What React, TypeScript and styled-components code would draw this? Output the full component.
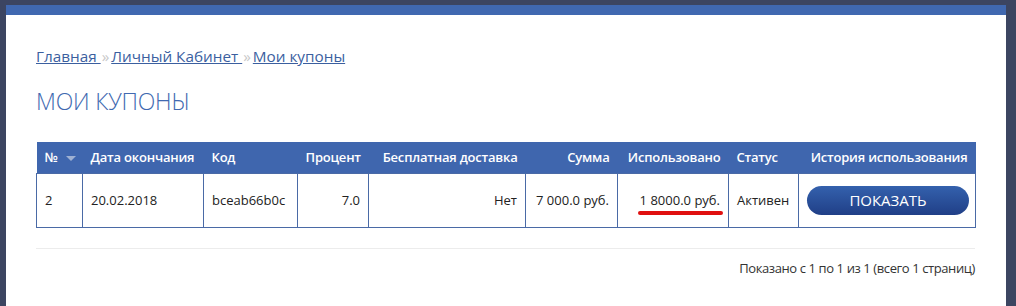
import React from "react";
import styled, { createGlobalStyle } from "styled-components";

const Global = createGlobalStyle`
  html, body { margin: 0; padding: 0; }
  body {
    background: #3c4561;
    font-family: "Open Sans", "Noto Sans", sans-serif;
    overflow: hidden;
  }
`;

const Page = styled.div`
  padding: 5px 10px 0 6px;
  height: 306px;
  box-sizing: border-box;
`;

const Panel = styled.div`
  background: #fff;
  height: 100%;
  border-top: 10px solid #4068b0;
  padding: 30px 30px 0 30px;
  box-sizing: border-box;
`;

const Crumbs = styled.nav`
  font-size: 15.3px;
  line-height: 22px;
  color: #c9c9c9;
`;

const Crumb = styled.a`
  color: #3b5f9f;
  text-decoration: underline;
  cursor: pointer;
`;

const Sep = styled.span`
  color: #c8c8c8;
  margin: 0 2px 0 1px;
`;

const Title = styled.h1`
  margin: 20px 0 0 0;
  font-size: 23px;
  line-height: 28px;
  font-weight: 300;
  color: #4169b0;
  letter-spacing: -0.2px;
`;

const Table = styled.table`
  margin-top: 27px;
  width: 939px;
  table-layout: fixed;
  border-collapse: collapse;
  font-size: 13px;
  color: #222;
`;

const Th = styled.th<{ $right?: boolean; $w: number }>`
  background: #3f66ae;
  color: #fff;
  font-weight: 600;
  font-size: 13px;
  height: 31px;
  padding: 0 8px;
  width: ${(p) => p.$w}px;
  text-align: ${(p) => (p.$right ? "right" : "left")};
  box-sizing: border-box;
  white-space: nowrap;
  letter-spacing: -0.2px;
`;

const Td = styled.td<{ $right?: boolean }>`
  border: 1px solid #4a6aa6;
  height: 54px;
  padding: 0 8px;
  text-align: ${(p) => (p.$right ? "right" : "left")};
  box-sizing: border-box;
  white-space: nowrap;
`;

const Caret = styled.span`
  display: inline-block;
  margin-left: 8px;
  width: 0;
  height: 0;
  border-left: 5px solid transparent;
  border-right: 5px solid transparent;
  border-top: 5px solid #9fb1d3;
  vertical-align: middle;
`;

const Marked = styled.span`
  position: relative;
  &::after {
    content: "";
    position: absolute;
    left: -2px;
    right: -3px;
    bottom: -6px;
    height: 4px;
    border-radius: 2px;
    background: #e01010;
  }
`;

const ShowButton = styled.button`
  display: block;
  margin-left: auto;
  width: 162px;
  height: 29px;
  border: none;
  border-radius: 15px;
  background: linear-gradient(#3461ad, #203f87);
  color: #fff;
  font-family: "Open Sans", "Noto Sans", sans-serif;
  font-size: 15px;
  cursor: pointer;
`;

const Divider = styled.div`
  width: 939px;
  height: 1px;
  background: #ececec;
  margin-top: 20px;
`;

const Footer = styled.div`
  width: 939px;
  text-align: right;
  font-size: 13px;
  color: #333;
  margin-top: 10px;
  letter-spacing: -0.4px;
`;

export default function App() {
  return (
    <>
      <Global />
      <Page>
        <Panel>
          <Crumbs>
            <Crumb>Главная </Crumb>
            <Sep>»</Sep>
            <Crumb>Личный Кабинет </Crumb>
            <Sep>»</Sep>
            <Crumb>Мои купоны</Crumb>
          </Crumbs>
          <Title>МОИ КУПОНЫ</Title>
          <Table>
            <thead>
              <tr>
                <Th $w={46}>
                  №<Caret />
                </Th>
                <Th $w={121}>Дата окончания</Th>
                <Th $w={94}>Код</Th>
                <Th $w={71} $right>
                  Процент
                </Th>
                <Th $w={157} $right>
                  Бесплатная доставка
                </Th>
                <Th $w={92} $right>
                  Сумма
                </Th>
                <Th $w={111} $right>
                  Использовано
                </Th>
                <Th $w={70}>Статус</Th>
                <Th $w={177} $right>
                  История использования
                </Th>
              </tr>
            </thead>
            <tbody>
              <tr>
                <Td>2</Td>
                <Td>20.02.2018</Td>
                <Td>bceab66b0c</Td>
                <Td $right>7.0</Td>
                <Td $right>Нет</Td>
                <Td $right>7 000.0 руб.</Td>
                <Td $right>
                  <Marked>1 8000.0 руб.</Marked>
                </Td>
                <Td>Активен</Td>
                <Td>
                  <ShowButton>ПОКАЗАТЬ</ShowButton>
                </Td>
              </tr>
            </tbody>
          </Table>
          <Divider />
          <Footer>Показано с 1 по 1 из 1 (всего 1 страниц)</Footer>
        </Panel>
      </Page>
    </>
  );
}
